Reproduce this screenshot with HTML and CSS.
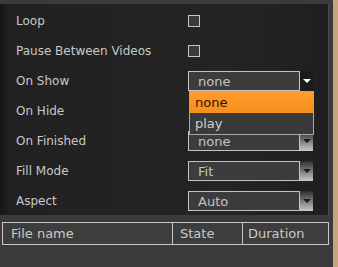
FILE: index.html
```html
<!DOCTYPE html>
<html lang="en">
<head>
  <meta charset="UTF-8">
  <title>Player settings</title>
  <link rel="stylesheet" href="styles.css">
</head>
<body>
  <div class="frame">
    <div class="main">
      <!-- Settings panel -->
      <div class="panel">
        <div class="row">
          <span class="label">Loop</span>
          <span class="check"></span>
        </div>
        <div class="row">
          <span class="label">Pause Between Videos</span>
          <span class="check"></span>
        </div>
        <div class="row">
          <span class="label">On Show</span>
          <div class="select open">
            <span class="value">none</span>
            <span class="arrow"></span>
            <ul class="dropdown">
              <li class="selected">none</li>
              <li>play</li>
            </ul>
          </div>
        </div>
        <div class="row">
          <span class="label">On Hide</span>
        </div>
        <div class="row">
          <span class="label">On Finished</span>
          <div class="select">
            <span class="value">none</span>
            <span class="arrow"></span>
          </div>
        </div>
        <div class="row">
          <span class="label">Fill Mode</span>
          <div class="select">
            <span class="value">Fit</span>
            <span class="arrow"></span>
          </div>
        </div>
        <div class="row">
          <span class="label">Aspect</span>
          <div class="select">
            <span class="value">Auto</span>
            <span class="arrow"></span>
          </div>
        </div>
      </div>

      <!-- Playlist -->
      <div class="list">
        <div class="list-head">
          <div class="col col-name">File name</div>
          <div class="col col-state">State</div>
          <div class="col col-dur">Duration</div>
        </div>
      </div>
    </div>
    <div class="edge"></div>
  </div>
</body>
</html>
```

FILE: styles.css
```css
body {
  margin: 0;
  width: 338px;
  height: 267px;
  overflow: hidden;
  background: #3a3a3a;
  font-family: Tahoma, "DejaVu Sans", sans-serif;
  font-size: 12px;
  color: #c9c9c9;
}

.frame {
  display: flex;
  height: 267px;
}

.main {
  width: 333px;
  padding-top: 4px;
  background: #3b3b3b;
}

.edge {
  flex: 1;
  background: #c6a47c;
}

/* Settings panel */
.panel {
  width: 328px;
  height: 210px;
  padding-top: 1px;
  background: linear-gradient(to right, #161616 0px, #212121 10px, #242424 70%, #1f1f1f 100%);
  border-right: 1px solid #4a4a4a;
}

.row {
  display: flex;
  align-items: center;
  height: 30px;
}

.label {
  width: 172px;
  padding-left: 16px;
  padding-top: 2px;
}

.check {
  width: 10px;
  height: 10px;
  margin-top: 1px;
  border: 1px solid #c8c8c8;
  background: #3a3a3a;
}

.select {
  position: relative;
  display: flex;
  width: 125px;
  height: 20px;
  margin-top: 1px;
}

.value {
  flex: 1;
  box-sizing: border-box;
  height: 20px;
  line-height: 19px;
  padding-left: 9px;
  border: 1px solid #c4c4c4;
  background: #3c3c3c;
  color: #c4c4c4;
  font-size: 13px;
}

.arrow {
  position: relative;
  width: 13px;
  height: 20px;
  background: linear-gradient(#2e2e2e, #9a9a9a 70%, #c8c8c8);
}

.arrow::after {
  content: "";
  position: absolute;
  left: 3px;
  top: 8px;
  border-left: 4px solid transparent;
  border-right: 4px solid transparent;
  border-top: 4px solid #1a1a1a;
}

.select.open .arrow {
  background: #1b1b1b;
}

.select.open .arrow::after {
  border-top-color: #ffffff;
}

/* Open list of the On Show select */
.dropdown {
  position: absolute;
  left: 1px;
  top: 20px;
  width: 123px;
  margin: 0;
  padding: 0;
  list-style: none;
  border: 1px solid #a8a8a8;
  background: #3a3a3a;
  z-index: 2;
  font-size: 13px;
}

.dropdown li {
  height: 21px;
  line-height: 21px;
  padding-left: 5px;
  color: #cfcfcf;
}

.dropdown li.selected {
  background: linear-gradient(#ff9d2e, #f68f1c);
  color: #2a1400;
}

/* Playlist header */
.list {
  padding: 7px 4px 0 2px;
}

.list-head {
  display: flex;
  height: 21px;
  border: 1px solid #c8c8c8;
  background: #3d3d3d;
}

.col {
  box-sizing: border-box;
  line-height: 21px;
  padding-left: 8px;
  font-size: 13px;
}

.col-name {
  width: 170px;
  border-right: 1px solid #c8c8c8;
}

.col-state {
  width: 70px;
  padding-left: 7px;
  border-right: 1px solid #c8c8c8;
}

.col-dur {
  flex: 1;
  padding-left: 5px;
}
```
